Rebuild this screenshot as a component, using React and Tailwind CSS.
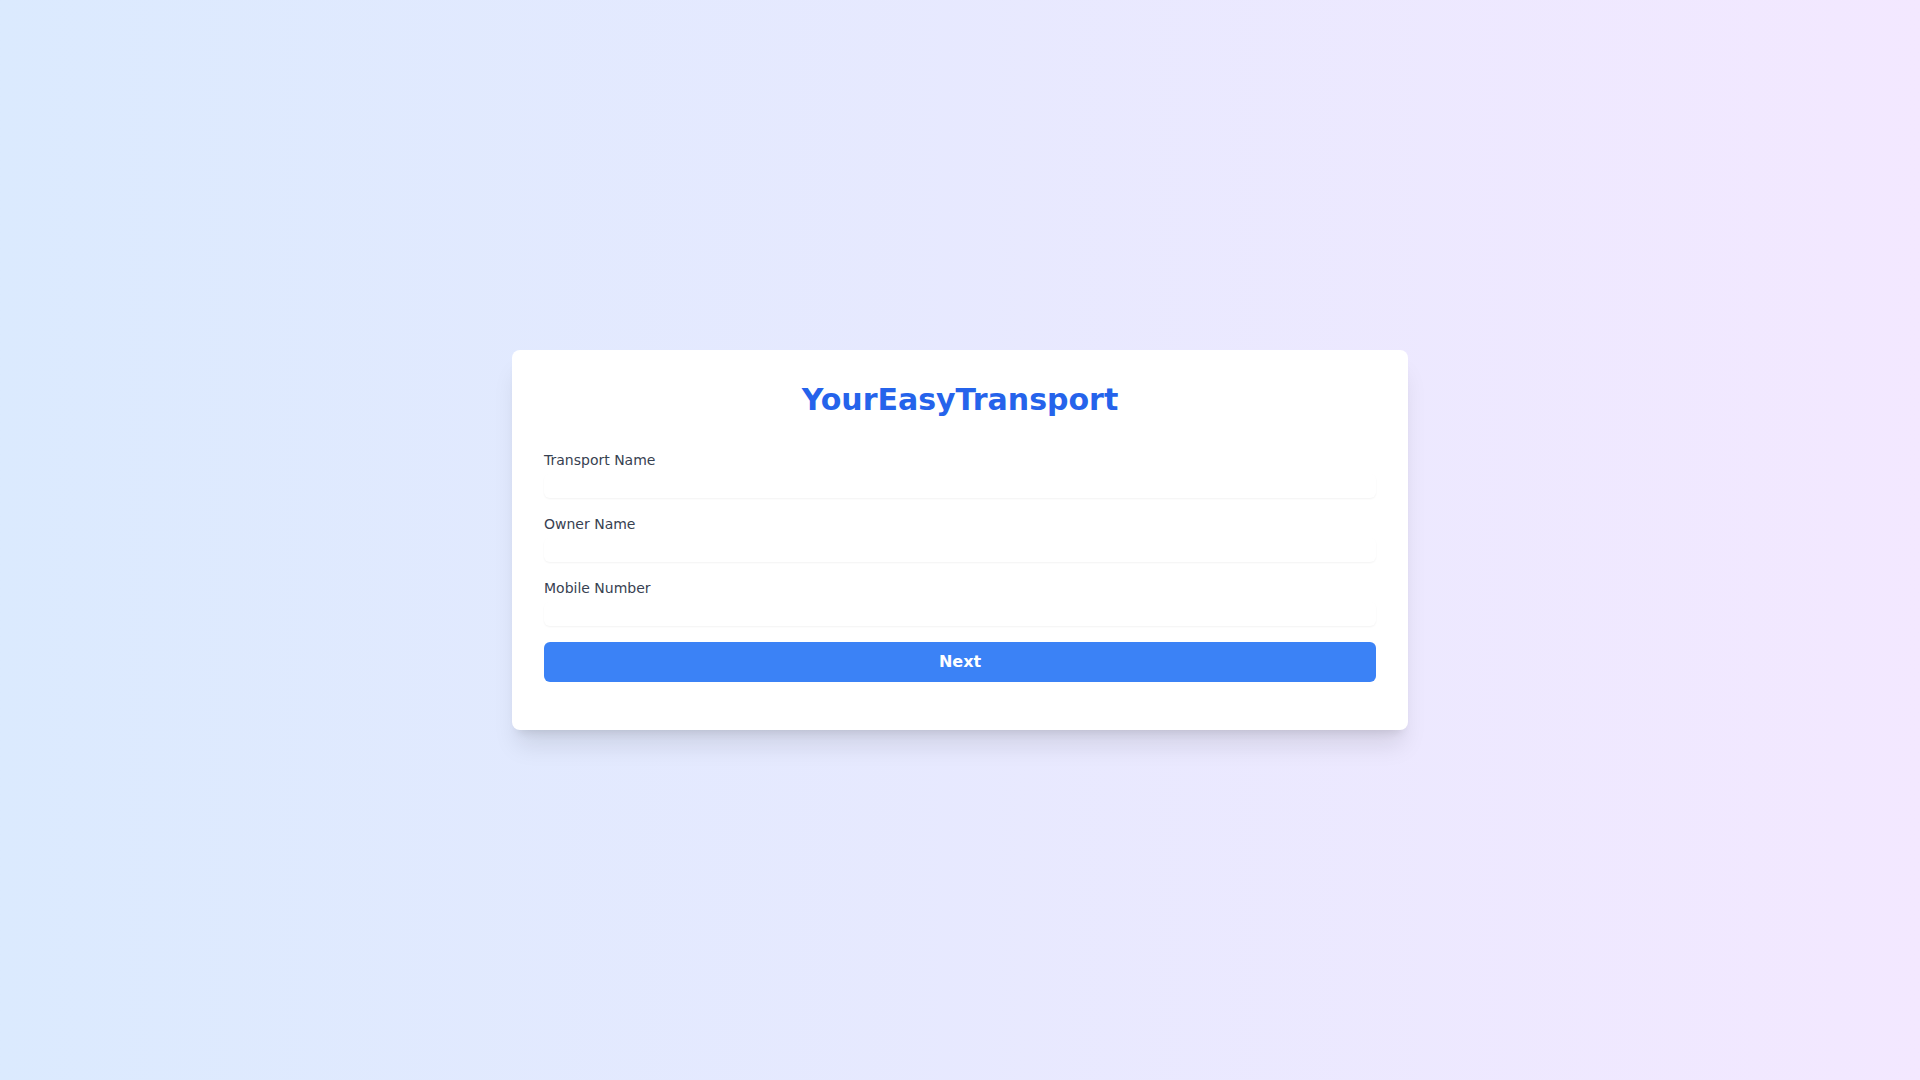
import React, { useState } from "react";

const fields = [
  { name: "transportName", label: "Transport Name", type: "text" },
  { name: "ownerName", label: "Owner Name", type: "text" },
  { name: "mobile", label: "Mobile Number", type: "tel" },
];

const App = () => {
  const [form, setForm] = useState({ transportName: "", ownerName: "", mobile: "" });

  const handleChange = (e) => {
    setForm((prev) => ({ ...prev, [e.target.name]: e.target.value }));
  };

  return (
    <div
      className="min-h-screen flex items-center justify-center bg-linear-to-r from-[#dbeafe] to-[#f3e8ff]"
      style={{ fontFamily: '"DejaVu Sans", "Noto Sans", sans-serif' }}
    >
      <div className="w-full max-w-4xl bg-white rounded-lg shadow-xl p-8">
        <h1 className="text-3xl font-bold text-[#2563eb] text-center mb-8">YourEasyTransport</h1>
        <form className="space-y-4" onSubmit={(e) => e.preventDefault()}>
          {fields.map((f) => (
            <div key={f.name}>
              <label className="block text-sm text-[#374151] mb-1">{f.label}</label>
              <input
                type={f.type}
                name={f.name}
                value={form[f.name]}
                onChange={handleChange}
                className="block w-full rounded-md shadow-xs outline-none"
              />
            </div>
          ))}
          <button
            type="submit"
            className="w-full bg-[#3b82f6] text-white font-bold py-2 rounded-md"
          >
            Next
          </button>
          <div></div>
        </form>
      </div>
    </div>
  );
};

export default App;
